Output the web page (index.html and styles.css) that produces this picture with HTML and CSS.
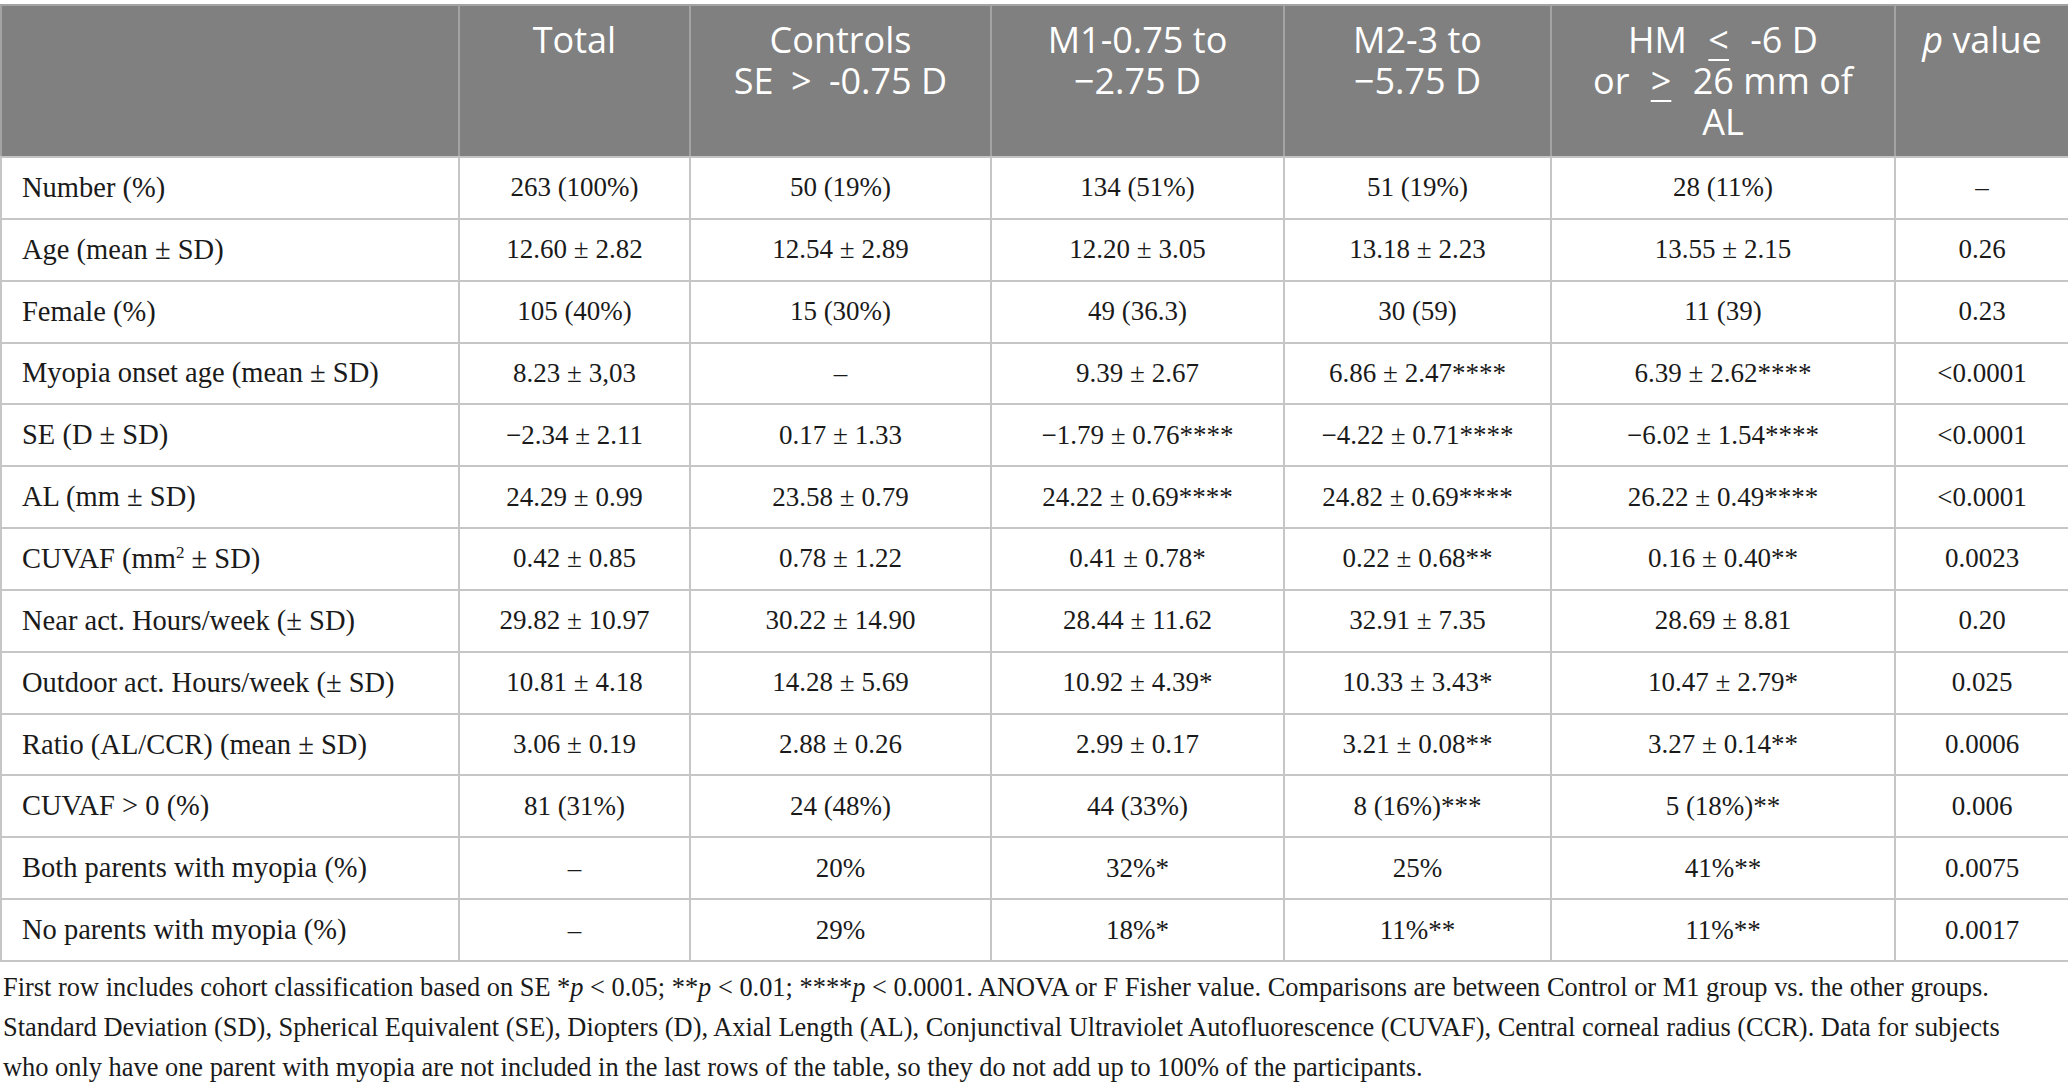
FILE: index.html
```html
<!DOCTYPE html>
<html>
<head>
<meta charset="utf-8">
<link rel="stylesheet" href="styles.css">
</head>
<body>
<div class="page">
<table class="data">
  <colgroup>
    <col class="c0"><col class="c1"><col class="c2"><col class="c3"><col class="c4"><col class="c5"><col class="c6">
  </colgroup>
  <thead>
    <tr>
      <th></th>
      <th>Total</th>
      <th>Controls<br>SE <span class="op">&gt;</span> -0.75 D</th>
      <th>M1-0.75 to<br>&minus;2.75 D</th>
      <th>M2-3 to<br>&minus;5.75 D</th>
      <th>HM <span class="ul">&lt;</span> -6 D<br>or <span class="ul">&gt;</span> 26 mm of<br>AL</th>
      <th><i>p</i> value</th>
    </tr>
  </thead>
  <tbody>
    <tr><td>Number (%)</td><td>263 (100%)</td><td>50 (19%)</td><td>134 (51%)</td><td>51 (19%)</td><td>28 (11%)</td><td>&ndash;</td></tr>
    <tr><td>Age (mean ± SD)</td><td>12.60 ± 2.82</td><td>12.54 ± 2.89</td><td>12.20 ± 3.05</td><td>13.18 ± 2.23</td><td>13.55 ± 2.15</td><td>0.26</td></tr>
    <tr><td>Female (%)</td><td>105 (40%)</td><td>15 (30%)</td><td>49 (36.3)</td><td>30 (59)</td><td>11 (39)</td><td>0.23</td></tr>
    <tr><td>Myopia onset age (mean ± SD)</td><td>8.23 ± 3,03</td><td>&ndash;</td><td>9.39 ± 2.67</td><td>6.86 ± 2.47****</td><td>6.39 ± 2.62****</td><td>&lt;0.0001</td></tr>
    <tr><td>SE (D ± SD)</td><td>&minus;2.34 ± 2.11</td><td>0.17 ± 1.33</td><td>&minus;1.79 ± 0.76****</td><td>&minus;4.22 ± 0.71****</td><td>&minus;6.02 ± 1.54****</td><td>&lt;0.0001</td></tr>
    <tr><td>AL (mm ± SD)</td><td>24.29 ± 0.99</td><td>23.58 ± 0.79</td><td>24.22 ± 0.69****</td><td>24.82 ± 0.69****</td><td>26.22 ± 0.49****</td><td>&lt;0.0001</td></tr>
    <tr><td>CUVAF (mm<sup>2</sup> ± SD)</td><td>0.42 ± 0.85</td><td>0.78 ± 1.22</td><td>0.41 ± 0.78*</td><td>0.22 ± 0.68**</td><td>0.16 ± 0.40**</td><td>0.0023</td></tr>
    <tr><td>Near act. Hours/week (± SD)</td><td>29.82 ± 10.97</td><td>30.22 ± 14.90</td><td>28.44 ± 11.62</td><td>32.91 ± 7.35</td><td>28.69 ± 8.81</td><td>0.20</td></tr>
    <tr><td>Outdoor act. Hours/week (± SD)</td><td>10.81 ± 4.18</td><td>14.28 ± 5.69</td><td>10.92 ± 4.39*</td><td>10.33 ± 3.43*</td><td>10.47 ± 2.79*</td><td>0.025</td></tr>
    <tr><td>Ratio (AL/CCR) (mean ± SD)</td><td>3.06 ± 0.19</td><td>2.88 ± 0.26</td><td>2.99 ± 0.17</td><td>3.21 ± 0.08**</td><td>3.27 ± 0.14**</td><td>0.0006</td></tr>
    <tr><td>CUVAF &gt; 0 (%)</td><td>81 (31%)</td><td>24 (48%)</td><td>44 (33%)</td><td>8 (16%)***</td><td>5 (18%)**</td><td>0.006</td></tr>
    <tr><td>Both parents with myopia (%)</td><td>&ndash;</td><td>20%</td><td>32%*</td><td>25%</td><td>41%**</td><td>0.0075</td></tr>
    <tr><td>No parents with myopia (%)</td><td>&ndash;</td><td>29%</td><td>18%*</td><td>11%**</td><td>11%**</td><td>0.0017</td></tr>
  </tbody>
</table>
<p class="note">First row includes cohort classification based on SE *<i>p</i> &lt; 0.05; **<i>p</i> &lt; 0.01; ****<i>p</i> &lt; 0.0001. ANOVA or F Fisher value. Comparisons are between Control or M1 group vs. the other groups. Standard Deviation (SD), Spherical Equivalent (SE), Diopters (D), Axial Length (AL), Conjunctival Ultraviolet Autofluorescence (CUVAF), Central corneal radius (CCR). Data for subjects who only have one parent with myopia are not included in the last rows of the table, so they do not add up to 100% of the participants.</p>
</div>
</body>
</html>
```

FILE: styles.css
```css
html, body {
  margin: 0;
  padding: 0;
  background: #ffffff;
}

.page {
  width: 2068px;
  padding-top: 4px;
}

.data {
  width: 2068px;
  table-layout: fixed;
  border-collapse: collapse;
  font-family: "Liberation Serif", "Times New Roman", serif;
  font-size: 27px;
  color: #1a1a1a;
}

.c0 { width: 458px; }
.c1 { width: 231px; }
.c2 { width: 301px; }
.c3 { width: 293px; }
.c4 { width: 267px; }
.c5 { width: 344px; }
.c6 { width: 174px; }

.data th {
  background: #7f807f;
  color: #ffffff;
  font-family: "Open Sans", "Noto Sans", sans-serif;
  font-weight: 400;
  font-size: 36px;
  line-height: 41px;
  vertical-align: top;
  text-align: center;
  height: 152px;
  box-sizing: border-box;
  padding: 13px 4px 0;
  border: 2px solid #a3a3a3;
  border-bottom-color: #c4c4c4;
}

.data th i {
  font-style: italic;
}

.op {
  margin: 0 8px;
}

.ul {
  text-decoration: underline;
  text-decoration-thickness: 2px;
  text-underline-offset: 6px;
  margin: 0 12px;
}

.data td {
  height: 59.85px;
  padding: 0 20px;
  text-align: center;
  vertical-align: middle;
  border: 2px solid #c6c6c6;
  white-space: nowrap;
}

.data td:first-child {
  text-align: left;
  font-size: 28.5px;
}

.data sup {
  font-size: 0.6em;
  line-height: 0;
}

.note {
  width: 2040px;
  margin: 0;
  padding: 5px 0 0 3px;
  font-family: "Liberation Serif", "Times New Roman", serif;
  font-size: 26.4px;
  line-height: 40px;
  color: #1a1a1a;
}
```
